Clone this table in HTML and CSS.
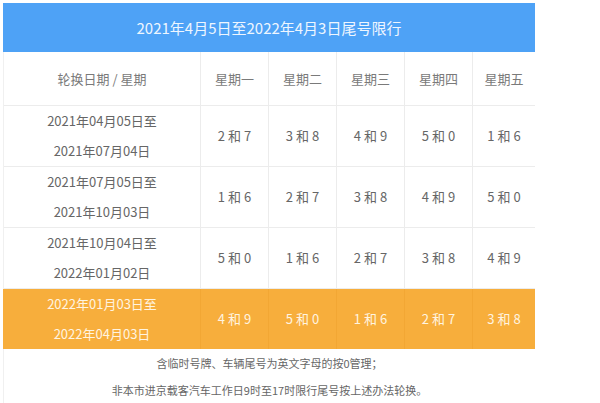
FILE: index.html
```html
<!DOCTYPE html>
<html lang="zh-CN">
<head>
<meta charset="utf-8">
<title>尾号限行</title>
<link rel="stylesheet" href="styles.css">
</head>
<body>
<div class="sheet">
  <div class="title">2021年4月5日至2022年4月3日尾号限行</div>
  <div class="row head">
    <div class="cell first">轮换日期 / 星期</div>
    <div class="cell">星期一</div>
    <div class="cell">星期二</div>
    <div class="cell">星期三</div>
    <div class="cell">星期四</div>
    <div class="cell">星期五</div>
  </div>
  <div class="row">
    <div class="cell first"><span>2021年04月05日至</span><span>2021年07月04日</span></div>
    <div class="cell">2 和 7</div>
    <div class="cell">3 和 8</div>
    <div class="cell">4 和 9</div>
    <div class="cell">5 和 0</div>
    <div class="cell">1 和 6</div>
  </div>
  <div class="row">
    <div class="cell first"><span>2021年07月05日至</span><span>2021年10月03日</span></div>
    <div class="cell">1 和 6</div>
    <div class="cell">2 和 7</div>
    <div class="cell">3 和 8</div>
    <div class="cell">4 和 9</div>
    <div class="cell">5 和 0</div>
  </div>
  <div class="row">
    <div class="cell first"><span>2021年10月04日至</span><span>2022年01月02日</span></div>
    <div class="cell">5 和 0</div>
    <div class="cell">1 和 6</div>
    <div class="cell">2 和 7</div>
    <div class="cell">3 和 8</div>
    <div class="cell">4 和 9</div>
  </div>
  <div class="row current">
    <div class="cell first"><span>2022年01月03日至</span><span>2022年04月03日</span></div>
    <div class="cell">4 和 9</div>
    <div class="cell">5 和 0</div>
    <div class="cell">1 和 6</div>
    <div class="cell">2 和 7</div>
    <div class="cell">3 和 8</div>
  </div>
  <div class="notes">
    <p>含临时号牌、车辆尾号为英文字母的按0管理；</p>
    <p>非本市进京载客汽车工作日9时至17时限行尾号按上述办法轮换。</p>
  </div>
</div>
</body>
</html>
```
FILE: styles.css
```css
html, body {
  margin: 0;
  padding: 0;
  background: #ffffff;
}
body {
  font-family: "Noto Sans CJK SC", "Noto Sans", sans-serif;
  color: #666666;
}
.sheet {
  margin: 3px 0 0 3px;
  width: 532px;
  border-left: 1px solid #f0f0f0;
  box-sizing: border-box;
}
.title {
  height: 49px;
  background: #4ea2f6;
  color: #eef6ff;
  font-size: 15px;
  display: flex;
  align-items: center;
  justify-content: center;
  margin-left: -1px;
}
.row {
  display: grid;
  grid-template-columns: 196px 68px 68px 68px 68px 63px;
  height: 61px;
  border-bottom: 1px solid #ececec;
  box-sizing: border-box;
  font-size: 13px;
}
.row.head {
  height: 54px;
  color: #7a7a7a;
}
.cell {
  display: flex;
  flex-direction: column;
  align-items: center;
  justify-content: center;
  border-left: 1px solid #ececec;
  line-height: 30px;
  white-space: nowrap;
}
.cell.first {
  border-left: none;
}
.row.current {
  background: #f7ae3c;
  color: #fff4e0;
  border-bottom: none;
  margin-left: -1px;
  padding-left: 1px;
  height: 60px;
}
.row.current .cell {
  border-left-color: #f2a734;
}
.row.current .cell.first {
  border-left: none;
}
.notes {
  padding-top: 1px;
  font-size: 11px;
  color: #666666;
  text-align: center;
}
.notes p {
  margin: 0;
  line-height: 27px;
}
```
